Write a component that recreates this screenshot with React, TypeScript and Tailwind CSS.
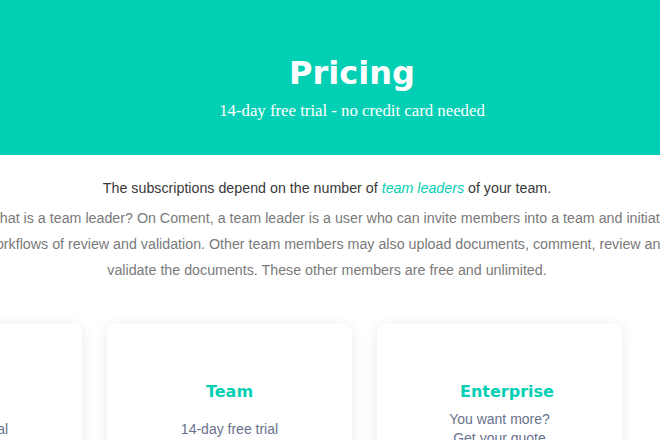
import React from "react";

const plans = [
  { name: "Solo", lines: ["14-day free trial"], shift: "" },
  { name: "Team", lines: ["14-day free trial"], shift: "" },
  { name: "Enterprise", lines: ["You want more?", "Get your quote"], shift: "pl-[15px]" },
];

export default function App() {
  return (
    <div className="w-[660px] h-[440px] overflow-hidden bg-white font-['Liberation_Sans',Arial,sans-serif]">
      <header className="h-[155px] bg-[#03cfb4] flex flex-col items-center pl-[44px] pt-[53px]">
        <h1 className="font-['DejaVu_Sans',sans-serif] font-bold text-[32px] leading-[40px] text-white">
          Pricing
        </h1>
        <p className="mt-[6px] font-['Liberation_Serif',serif] text-[16.75px] leading-[24px] text-white">
          14-day free trial - no credit card needed
        </p>
      </header>

      <section className="flex flex-col items-center pt-[23px]">
        <p className="text-[14.25px] leading-[20px] text-[#3a3a3a] whitespace-nowrap -ml-[6px]">
          The subscriptions depend on the number of{" "}
          <em className="text-[#03cfb4]">team leaders</em> of your team.
        </p>
        <div className="w-[660px] flex justify-center -ml-[6px]">
          <p className="shrink-0 w-[710px] mt-[7px] text-center text-[14.25px] leading-[26px] text-[#7a7a7a]">
            What is a team leader? On Coment, a team leader is a user who can invite members into a team and initiate
            workflows of review and validation. Other team members may also upload documents, comment, review and
            validate the documents. These other members are free and unlimited.
          </p>
        </div>
      </section>

      <div className="flex gap-[25px] -ml-[163px] mt-[41px]">
        {plans.map((p) => (
          <div
            key={p.name}
            className="shrink-0 w-[245px] h-[200px] rounded-lg bg-white shadow-[0_2px_14px_rgba(0,0,0,0.09)] flex flex-col items-center pt-[56px]"
          >
            <h2
              className={`font-['DejaVu_Sans',sans-serif] font-bold text-[16px] leading-[24px] text-[#03cfb4] ${p.shift}`}
            >
              {p.name}
            </h2>
            <div className="h-[50px] flex flex-col justify-center items-center text-[14px] leading-[19px] text-[#69728d]">
              {p.lines.map((l) => (
                <span key={l}>{l}</span>
              ))}
            </div>
          </div>
        ))}
      </div>
    </div>
  );
}
